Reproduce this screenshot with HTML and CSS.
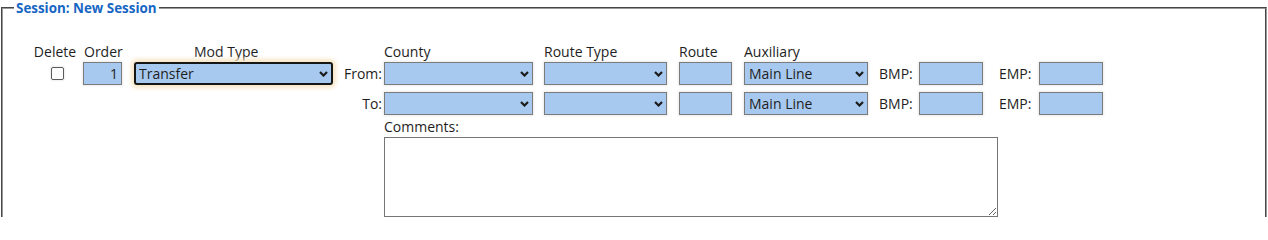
FILE: index.html
```html
<!DOCTYPE html>
<html lang="en">
<head>
<meta charset="utf-8">
<title>Session: New Session</title>
<link rel="stylesheet" href="styles.css">
</head>
<body>
<fieldset class="session">
  <legend class="session-legend">Session: New Session</legend>
  <div class="mod-grid">
    <div class="lbl c-del">Delete</div>
    <div class="lbl c-ord">Order</div>
    <div class="lbl c-mod lbl-mod">Mod Type</div>
    <div class="lbl c-cty">County</div>
    <div class="lbl c-rtt">Route Type</div>
    <div class="lbl c-rte">Route</div>
    <div class="lbl c-aux">Auxiliary</div>

    <div class="r1 c-del"><input type="checkbox" class="chk"></div>
    <div class="r1 c-ord"><input type="text" class="fld fld-order" value="1"></div>
    <div class="r1 c-mod">
      <span class="sel-wrap sel-mod focused">
        <select class="sel"><option>Transfer</option></select>
        <svg class="chev" viewBox="0 0 9 6" width="9" height="6"><path d="M1 1 L4.5 4.5 L8 1" fill="none" stroke="#1b1b1b" stroke-width="2.2"/></svg>
      </span>
    </div>
    <div class="r1 c-dir">From:</div>
    <div class="r1 c-cty">
      <span class="sel-wrap sel-cty">
        <select class="sel"><option></option></select>
        <svg class="chev" viewBox="0 0 9 6" width="9" height="6"><path d="M1 1 L4.5 4.5 L8 1" fill="none" stroke="#1b1b1b" stroke-width="2.2"/></svg>
      </span>
    </div>
    <div class="r1 c-rtt">
      <span class="sel-wrap sel-rtt">
        <select class="sel"><option></option></select>
        <svg class="chev" viewBox="0 0 9 6" width="9" height="6"><path d="M1 1 L4.5 4.5 L8 1" fill="none" stroke="#1b1b1b" stroke-width="2.2"/></svg>
      </span>
    </div>
    <div class="r1 c-rte"><input type="text" class="fld fld-route"></div>
    <div class="r1 c-aux">
      <span class="sel-wrap sel-aux">
        <select class="sel"><option>Main Line</option></select>
        <svg class="chev" viewBox="0 0 9 6" width="9" height="6"><path d="M1 1 L4.5 4.5 L8 1" fill="none" stroke="#1b1b1b" stroke-width="2.2"/></svg>
      </span>
    </div>
    <div class="r1 c-bmpl">BMP:</div>
    <div class="r1 c-bmp"><input type="text" class="fld fld-mp"></div>
    <div class="r1 c-empl">EMP:</div>
    <div class="r1 c-emp"><input type="text" class="fld fld-mp"></div>

    <div class="r2 c-dir">To:</div>
    <div class="r2 c-cty">
      <span class="sel-wrap sel-cty">
        <select class="sel"><option></option></select>
        <svg class="chev" viewBox="0 0 9 6" width="9" height="6"><path d="M1 1 L4.5 4.5 L8 1" fill="none" stroke="#1b1b1b" stroke-width="2.2"/></svg>
      </span>
    </div>
    <div class="r2 c-rtt">
      <span class="sel-wrap sel-rtt">
        <select class="sel"><option></option></select>
        <svg class="chev" viewBox="0 0 9 6" width="9" height="6"><path d="M1 1 L4.5 4.5 L8 1" fill="none" stroke="#1b1b1b" stroke-width="2.2"/></svg>
      </span>
    </div>
    <div class="r2 c-rte"><input type="text" class="fld fld-route"></div>
    <div class="r2 c-aux">
      <span class="sel-wrap sel-aux">
        <select class="sel"><option>Main Line</option></select>
        <svg class="chev" viewBox="0 0 9 6" width="9" height="6"><path d="M1 1 L4.5 4.5 L8 1" fill="none" stroke="#1b1b1b" stroke-width="2.2"/></svg>
      </span>
    </div>
    <div class="r2 c-bmpl">BMP:</div>
    <div class="r2 c-bmp"><input type="text" class="fld fld-mp"></div>
    <div class="r2 c-empl">EMP:</div>
    <div class="r2 c-emp"><input type="text" class="fld fld-mp"></div>

    <div class="r3 c-comments">Comments:</div>
    <div class="r4 c-comments"><textarea class="comments"></textarea></div>
  </div>
</fieldset>
</body>
</html>
```

FILE: styles.css
```css
html, body {
  margin: 0;
  padding: 0;
  background: #ffffff;
  height: 217px;
  overflow: hidden;
}

body {
  font-family: "Open Sans", "Noto Sans", sans-serif;
  font-size: 14px;
  color: #1e1e1e;
}

.session {
  margin: 0 1px;
  padding: 26px 0 20px 0;
  border: 2px groove #9a9a9a;
  min-height: 300px;
}

.session-legend {
  margin-left: 11px;
  padding: 0 2px;
  font-size: 13.4px;
  font-weight: 700;
  line-height: 16px;
  color: #1766c4;
}

.mod-grid {
  display: grid;
  margin-left: 27px;
  grid-template-columns: 50px 50px 208px 46px 156px 135px 65px 135px 44px 76px 44px 71px;
  grid-template-rows: 20px 30px 25px 20px auto;
  align-items: start;
}

.lbl { grid-row: 1; line-height: 19px; }
.r1 { grid-row: 2; line-height: 19px; }
.r2 { grid-row: 3; line-height: 19px; }
.r3 { grid-row: 4; line-height: 19px; }
.r4 { grid-row: 5; }

.c-del { grid-column: 1; text-align: center; }
.c-ord { grid-column: 2; }
.c-mod { grid-column: 3; }
.c-dir { grid-column: 4; text-align: right; padding-right: 2px; padding-top: 5px; line-height: 14px; }
.c-cty { grid-column: 5; }
.c-rtt { grid-column: 6; padding-left: 4px; }
.c-rte { grid-column: 7; padding-left: 4px; }
.c-aux { grid-column: 8; padding-left: 4px; }
.c-bmpl { grid-column: 9; padding-left: 4px; padding-top: 5px; line-height: 14px; }
.c-bmp { grid-column: 10; }
.c-empl { grid-column: 11; padding-left: 4px; padding-top: 5px; line-height: 14px; }
.c-emp { grid-column: 12; }
.c-comments { grid-column: 5 / -1; }

.lbl.c-ord { padding-left: 4px; }
.lbl-mod { padding-left: 64px; }
.r1.c-ord { padding-left: 3px; }
.r1.c-mod { padding-left: 4px; }

.chk {
  appearance: none;
  -webkit-appearance: none;
  display: block;
  margin: 5px 0 0 21px;
  width: 13px;
  height: 13px;
  border: 1px solid #5a5a5a;
  border-radius: 2px;
  background: #ffffff;
  box-shadow: 0 0 2px 1px rgba(0, 0, 0, 0.07);
}

.fld {
  display: block;
  box-sizing: border-box;
  height: 23px;
  margin: 0;
  padding: 0 3px;
  border: 1px solid #7b7b7b;
  border-radius: 0;
  background: #a8c9ef;
  font-family: "Open Sans", "Noto Sans", sans-serif;
  font-size: 14px;
  color: #1e1e1e;
  box-shadow: 0 0 2px 1px rgba(0, 0, 0, 0.08);
  outline: none;
}

.fld-order { width: 39px; text-align: right; }
.fld-route { width: 53px; }
.fld-mp { width: 64px; }

.sel-wrap {
  position: relative;
  display: block;
  height: 23px;
}

.sel {
  appearance: none;
  -webkit-appearance: none;
  display: block;
  box-sizing: border-box;
  width: 100%;
  height: 23px;
  margin: 0;
  padding: 0 16px 0 4px;
  border: 1px solid #7b7b7b;
  border-radius: 0;
  background: #a8c9ef;
  font-family: "Open Sans", "Noto Sans", sans-serif;
  font-size: 14px;
  color: #1e1e1e;
  box-shadow: 0 0 2px 1px rgba(0, 0, 0, 0.08);
  outline: none;
}

.chev {
  position: absolute;
  right: 4px;
  top: 9px;
  pointer-events: none;
}

.sel-mod { width: 199px; }
.sel-cty { width: 149px; }
.sel-rtt { width: 123px; }
.sel-aux { width: 124px; }

.focused .sel {
  border: 2px solid #161616;
  border-radius: 3px;
  padding-left: 3px;
  box-shadow: 0 0 4px 3px #f7e6c6;
}

.focused .chev { right: 5px; }

.comments {
  display: block;
  box-sizing: border-box;
  width: 614px;
  height: 80px;
  margin: 0;
  border: 1px solid #767676;
  background: #ffffff;
  resize: both;
  font-family: "Open Sans", "Noto Sans", sans-serif;
  font-size: 14px;
}
```
